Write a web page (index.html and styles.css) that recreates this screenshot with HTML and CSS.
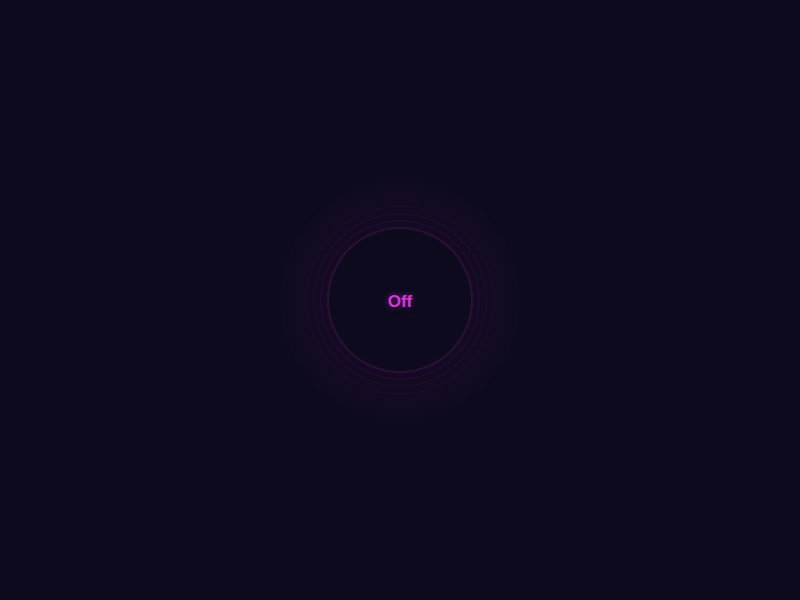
FILE: index.html
```html
<!DOCTYPE html>
<html>
<head>
<meta charset="utf-8">
<link rel="stylesheet" href="styles.css">
</head>
<body>
<div class="stage">
  <div class="glow">
    <div class="ring r3"></div>
    <div class="ring r2"></div>
    <div class="ring r1"></div>
    <button class="knob"><span class="label">Off</span></button>
  </div>
</div>
</body>
</html>
```

FILE: styles.css
```css
html, body {
  margin: 0;
  padding: 0;
  background: #0d0a1d;
  width: 100%;
  height: 100%;
}
.stage {
  width: 800px;
  height: 600px;
  display: flex;
  align-items: center;
  justify-content: center;
}
.glow {
  position: relative;
  width: 240px;
  height: 240px;
  border-radius: 50%;
  display: flex;
  align-items: center;
  justify-content: center;
  background: radial-gradient(circle, rgba(110, 20, 110, 0.07) 0%, rgba(110, 20, 110, 0.05) 55%, rgba(110, 20, 110, 0) 100%);
}
.ring {
  position: absolute;
  border-radius: 50%;
  border: 2px solid rgba(170, 40, 170, 0.06);
}
.r1 { width: 156px; height: 156px; border-color: rgba(170, 40, 170, 0.08); }
.r2 { width: 170px; height: 170px; border-color: rgba(170, 40, 170, 0.06); }
.r3 { width: 186px; height: 186px; border-color: rgba(170, 40, 170, 0.04); }
.knob {
  position: relative;
  width: 146px;
  height: 146px;
  border-radius: 50%;
  border: 2px solid rgba(160, 40, 160, 0.20);
  background: #0d0a1d;
  display: flex;
  align-items: center;
  justify-content: center;
  padding: 0;
  box-shadow: 0 0 10px rgba(150, 30, 150, 0.08);
}
.label {
  font-family: "Liberation Sans", Arial, sans-serif;
  font-weight: bold;
  font-size: 17px;
  color: #d23ad2;
  text-shadow: 0 0 6px rgba(220, 50, 220, 0.5);
  margin-top: 4px;
}
```
